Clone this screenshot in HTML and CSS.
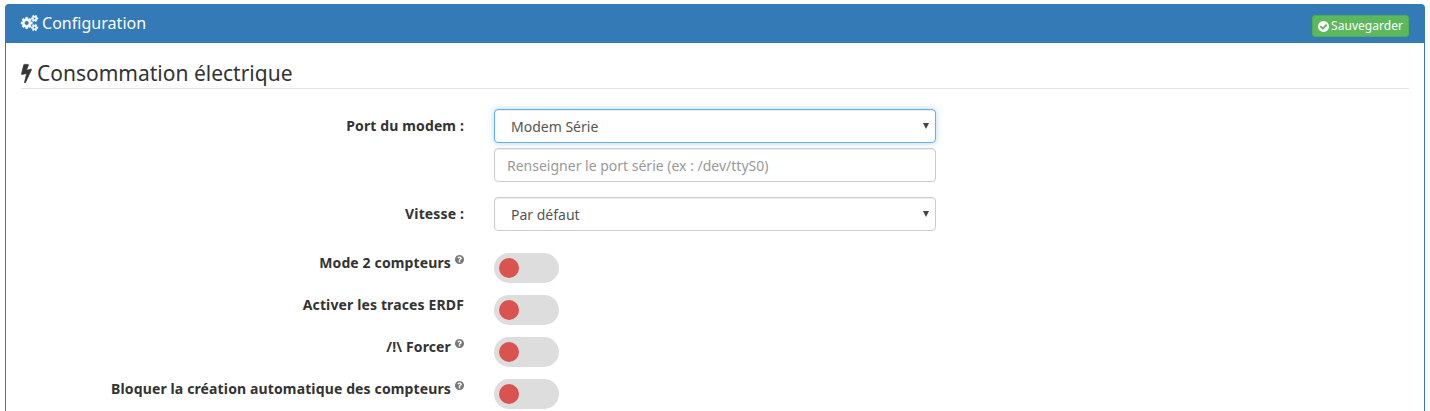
FILE: index.html
```html
<!DOCTYPE html>
<html lang="fr">
<head>
<meta charset="utf-8">
<title>Configuration</title>
<link rel="stylesheet" href="styles.css">
</head>
<body>
<svg class="defs" width="0" height="0">
  <symbol id="question" viewBox="128 128 1536 1536"><path d="M1024 1376v-192q0-14-9-23t-23-9h-192q-14 0-23 9t-9 23v192q0 14 9 23t23 9h192q14 0 23-9t9-23zm256-672q0-88-55.500-163t-138.500-116-170-41q-243 0-371 213-15 24 8 42l132 100q7 6 19 6 16 0 25-12 53-68 86-92 34-24 86-24 48 0 85.500 26t37.500 59q0 38-20 61t-68 45q-63 28-115.500 86.500t-52.500 125.500v36q0 14 9 23t23 9h192q14 0 23-9t9-23q0-19 21.500-49.500t54.500-49.500q32-18 49-28.500t46-35 44.500-48 28-60.500 12.500-81zm384 192q0 209-103 385.500t-279.500 279.500-385.500 103-385.500-103-279.500-279.500-103-385.500 103-385.500 279.500-279.500 385.500-103 385.500 103 279.500 279.500 103 385.500z"/></symbol>
</svg>
<section class="panel">
  <header class="panel-heading">
    <h3 class="panel-title"><svg class="cogs" viewBox="-64 0 1920 1792"><path d="M832 896q0-106-75-181t-181-75-181 75-75 181 75 181 181 75 181-75 75-181zm768 512q0-52-38-90t-90-38-90 38-38 90q0 53 37.500 90.500t90.500 37.500 90.500-37.500 37.500-90.500zm0-1024q0-52-38-90t-90-38-90 38-38 90q0 53 37.500 90.500t90.500 37.500 90.500-37.500 37.500-90.500zm-384 421v185q0 10-7 19.500t-16 10.500l-155 24q-11 35-32 76 34 48 90 115 7 11 7 20 0 12-7 19-23 30-82.500 89.500t-78.500 59.500q-11 0-21-7l-115-90q-37 19-77 31-11 108-23 155-7 24-30 24h-186q-11 0-20-7.500t-10-17.500l-23-153q-34-10-75-31l-118 89q-7 7-20 7-11 0-21-8-144-133-144-160 0-9 7-19 10-14 41-53t47-61q-23-44-35-82l-152-24q-10-1-17-9.500t-7-19.500v-185q0-10 7-19.500t16-10.500l155-24q11-35 32-76-34-48-90-115-7-11-7-20 0-12 7-20 22-30 82-89t79-59q11 0 21 7l115 90q34-18 77-32 11-108 23-154 7-24 30-24h186q11 0 20 7.500t10 17.500l23 153q34 10 75 31l118-89q8-7 20-7 11 0 21 8 144 133 144 160 0 8-7 19-12 16-42 54t-45 60q23 48 34 82l152 23q10 2 17 10.500t7 19.500zm640 533v140q0 16-149 31-12 27-30 52 51 113 51 138 0 4-4 7-122 71-124 71-8 0-46-47t-52-68q-20 2-30 2t-30-2q-14 21-52 68t-46 47q-2 0-124-71-4-3-4-7 0-25 51-138-18-25-30-52-149-15-149-31v-140q0-16 149-31 13-29 30-52-51-113-51-138 0-4 4-7 4-2 35-20t59-34 30-16q8 0 46 46.500t52 67.500q20-2 30-2t30 2q51-71 92-112l6-2q4 0 124 70 4 3 4 7 0 25-51 138 17 23 30 52 149 15 149 31zm0-1024v140q0 16-149 31-12 27-30 52 51 113 51 138 0 4-4 7-122 71-124 71-8 0-46-47t-52-68q-20 2-30 2t-30-2q-14 21-52 68t-46 47q-2 0-124-71-4-3-4-7 0-25 51-138-18-25-30-52-149-15-149-31v-140q0-16 149-31 13-29 30-52-51-113-51-138 0-4 4-7 4-2 35-20t59-34 30-16q8 0 46 46.500t52 67.500q20-2 30-2t30 2q51-71 92-112l6-2q4 0 124 70 4 3 4 7 0 25-51 138 17 23 30 52 149 15 149 31z"/></svg><span>Configuration</span></h3>
    <button class="save"><svg class="check" viewBox="128 128 1536 1536"><path d="M1412 734q0-28-18-46l-91-90q-19-19-45-19t-45 19l-408 407-226-226q-19-19-45-19t-45 19l-91 90q-18 18-18 46 0 27 18 45l362 362q19 19 45 19 27 0 46-19l543-543q18-18 18-45zm252 162q0 209-103 385.500t-279.500 279.500-385.500 103-385.500-103-279.500-279.500-103-385.500 103-385.500 279.500-279.500 385.500-103 385.500 103 279.500 279.500 103 385.500z"/></svg><span>Sauvegarder</span></button>
  </header>
  <div class="panel-body">
    <h2 class="legend"><svg class="bolt" viewBox="448 0 896 1792"><path d="M1333 566q18 20 7 44l-540 1157q-13 25-42 25-4 0-14-2-17-5-25.500-19t-4.500-30l197-808-406 101q-4 1-12 1-18 0-31-11-18-15-13-39l201-825q4-16 18-26t32-10h328q19 0 32 12.500t13 29.500q0 8-5 18l-171 463 396-98q8-2 12-2 19 0 34 15z"/></svg><span>Consommation électrique</span></h2>
    <div class="row">
      <div class="label">Port du modem :</div>
      <div class="fields">
        <div class="control select focused"><span>Modem Série</span><i class="arrow"></i></div>
        <input class="control" placeholder="Renseigner le port série (ex : /dev/ttyS0)">
      </div>
    </div>
    <div class="row">
      <div class="label">Vitesse :</div>
      <div class="fields">
        <div class="control select"><span>Par défaut</span><i class="arrow"></i></div>
      </div>
    </div>
    <div class="row toggle-row">
      <div class="label">Mode 2 compteurs<svg class="help"><use href="#question"/></svg></div>
      <div class="switch"></div>
    </div>
    <div class="row toggle-row">
      <div class="label">Activer les traces ERDF</div>
      <div class="switch"></div>
    </div>
    <div class="row toggle-row">
      <div class="label">/!\ Forcer<svg class="help"><use href="#question"/></svg></div>
      <div class="switch"></div>
    </div>
    <div class="row toggle-row">
      <div class="label">Bloquer la création automatique des compteurs<svg class="help"><use href="#question"/></svg></div>
      <div class="switch"></div>
    </div>
  </div>
</section>
</body>
</html>
```
FILE: styles.css
```css
* { box-sizing: border-box; }
body {
  margin: 0;
  padding: 4px 5px 0;
  background: #fff;
  color: #333;
  font: 14px/20px "Noto Sans", sans-serif;
}
svg { fill: currentColor; flex: none; }
.defs { display: none; }
.panel {
  height: calc(100vh - 4px);
  border: 1px solid #337ab7;
  border-bottom: 0;
  border-radius: 4px 4px 0 0;
}
.panel-heading {
  display: flex;
  justify-content: space-between;
  align-items: flex-start;
  height: 38px;
  padding: 10px 15px 0;
  background: #337ab7;
  color: #fff;
}
.panel-title {
  display: flex;
  gap: 4px;
  margin: 0;
  font-size: 16px;
  font-weight: 400;
  line-height: 17px;
  letter-spacing: .03px;
}
.cogs {
  width: 17px;
  height: 16px;
  overflow: visible;
  stroke: currentColor;
  stroke-width: 50;
}
.save {
  display: flex;
  align-items: center;
  gap: 3px;
  width: 97px;
  height: 22px;
  padding: 0 5px;
  border: 1px solid #4cae4c;
  border-radius: 3px;
  background: #5cb85c;
  color: #fff;
  font: 12px/18px "Noto Sans", sans-serif;
  letter-spacing: .05px;
}
.check { width: 11px; height: 11px; margin-right: -1px; }
.panel-body { padding: 15px 15px 0; }
.legend {
  display: flex;
  gap: 5px;
  height: 31px;
  margin: 0 0 20px;
  border-bottom: 1px solid #e5e5e5;
  font-size: 21px;
  font-weight: 400;
  line-height: 30px;
}
.bolt {
  width: 11px;
  height: 20px;
  margin-top: 5px;
  overflow: visible;
  stroke: currentColor;
  stroke-width: 60;
}
.row {
  display: grid;
  grid-template-columns: 443px 442px;
  column-gap: 30px;
  margin-bottom: 15px;
}
.label {
  padding-top: 7px;
  text-align: right;
  font-weight: 700;
  letter-spacing: .13px;
  white-space: nowrap;
}
.fields { display: grid; gap: 5px; }
.control {
  width: 100%;
  height: 34px;
  padding: 6px 12px;
  border: 1px solid #ccc;
  border-radius: 4px;
  background: #fff;
  box-shadow: inset 0 1px 1px rgba(0, 0, 0, .075);
  color: #555;
  font: 14px/20px "Noto Sans", sans-serif;
}
.control::placeholder { color: #999; opacity: 1; }
.select {
  display: flex;
  justify-content: space-between;
  padding: 7px 6px 5px 16px;
}
.focused {
  border-color: #66afe9;
  box-shadow: inset 0 1px 1px rgba(0, 0, 0, .075), 0 0 6px rgba(102, 175, 233, .5);
}
.arrow {
  width: 6px;
  height: 6px;
  margin-top: 6px;
  background: #444;
  clip-path: polygon(0 0, 100% 0, 50% 100%);
}
.toggle-row { height: 42px; margin: 0; }
.help {
  width: 9px;
  height: 9px;
  margin-left: 4px;
  vertical-align: 4px;
  color: #777;
}
.switch {
  width: 65px;
  height: 30px;
  margin-top: 7px;
  padding: 5px;
  border-radius: 15px;
  background: #ddd;
}
.switch::before {
  content: "";
  display: block;
  width: 20px;
  height: 20px;
  border-radius: 50%;
  background: #d9534f;
}
```
